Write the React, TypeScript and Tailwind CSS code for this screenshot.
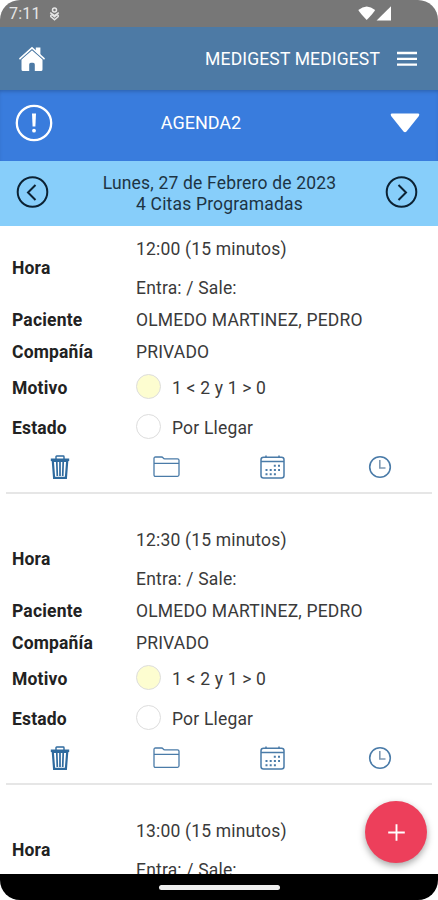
import type { ReactNode } from "react";

type Cita = {
  id: number;
  hora: string;
  paciente: string;
  compania: string;
  motivo: string;
  estado: string;
};

const CITAS: Cita[] = ["12:00", "12:30", "13:00"].map((h, i) => ({
  id: i,
  hora: `${h} (15 minutos)`,
  paciente: "OLMEDO MARTINEZ, PEDRO",
  compania: "PRIVADO",
  motivo: "1 < 2 y 1 > 0",
  estado: "Por Llegar",
}));

export default function App() {
  return (
    <div className="w-full h-screen bg-white overflow-hidden">
      <div className="relative h-full flex flex-col rounded-[20px] overflow-hidden bg-white font-['Roboto',sans-serif] text-[17.5px] tracking-[0.18px] text-[#3a3a3a]">
        <StatusBar />
        <Header />
        <AgendaBar />
        <DateBar />
        <main className="flex-1 min-h-0 overflow-hidden">
          {CITAS.map((c) => (
            <CitaCard key={c.id} cita={c} />
          ))}
        </main>
        <div className="h-[26px] shrink-0 bg-black flex justify-center pt-[10.5px]">
          <span className="h-[5px] w-[121px] rounded-full bg-[#eee]" />
        </div>
        <button
          aria-label="Nueva cita"
          className="absolute right-[11px] bottom-[37px] size-[62px] rounded-full bg-[#ed3f5b] grid place-items-center shadow-[0_3px_7px_rgba(0,0,0,0.35)]"
        >
          <svg width="17" height="17" viewBox="0 0 17 17" stroke="#fff" strokeWidth="1.900">
            <path d="M8.500 .2v16.600M.2 8.500h16.600" />
          </svg>
        </button>
      </div>
    </div>
  );
}

function StatusBar() {
  return (
    <div className="h-[27px] shrink-0 bg-[#777] flex items-center pl-[9px] pr-[47px] text-[#e6e6e6]">
      <span className="text-[16px] leading-none pt-px w-[40px]">7:11</span>
      <svg width="11" height="14" viewBox="0 0 11 14" fill="none" stroke="currentColor" strokeWidth="1.5">
        <circle cx="5.500" cy="3" r="2" />
        <path d="M1.200 5.600l4.300 3 4.300-3M5.500 12.800L2 9.800c-1-1.400.8-2.700 2-1.400l1.500 1.300L7 8.400c1.200-1.300 3 0 2 1.400z" />
      </svg>
      <svg className="ml-auto" width="33" height="15" viewBox="0 0 33 15" fill="#fff">
        <path d="M.3 4Q8.700 -3 17.100 4Q16 6.500 8.700 14Q1.500 6.500 .3 4z" />
        <path d="M33 .2V14.500H18.600z" />
      </svg>
    </div>
  );
}

function Header() {
  return (
    <header className="h-[63px] shrink-0 bg-[#4d7aa5] flex items-center pl-[19px] pr-5 text-white">
      <svg width="26" height="26" viewBox="0 0 26 26" fill="#fff">
        <path d="M16.800 1.500h4.600v8l-4.600-4z" />
        <path d="M13 4.300l10.500 9.300v9.900q0 1.500-1.500 1.500h-6.200v-6.500q0-1.700-1.700-1.700h-2.200q-1.700 0-1.700 1.700V25H4q-1.500 0-1.500-1.500V13.600z" />
        <path d="M1 12.600L13 1.800l12 10.800" fill="none" stroke="#fff" strokeWidth="1.700" strokeLinecap="round" />
        <path d="M1.800 13.600L13 3.600l11.200 10" fill="none" stroke="#4d7aa5" strokeWidth=".5" />
      </svg>
      <span className="ml-auto mr-4 pt-px tracking-[0.15px]">MEDIGEST MEDIGEST</span>
      <svg width="22" height="16" viewBox="0 0 22 16" stroke="#fff" strokeWidth="2.300">
        <path d="M1 2h20M1 7.800h20M1 13.600h20" />
      </svg>
    </header>
  );
}

function AgendaBar() {
  return (
    <div className="h-[71px] shrink-0 bg-[#397cdd] flex items-center pl-[15px] pr-[18px] pb-[6px] text-white shadow-[inset_0_3px_4px_-2px_rgba(0,0,0,0.25)]">
      <svg width="38" height="38" viewBox="0 0 38 38" fill="none" stroke="#fff">
        <circle cx="19" cy="19" r="17.200" strokeWidth="2.300" />
        <path d="M17 9.500h4l-.6 13h-2.800z" fill="#fff" stroke="none" />
        <circle cx="19" cy="26.700" r="1.900" fill="#fff" stroke="none" />
      </svg>
      <span className="flex-1 text-center pr-[41px] text-[18px] tracking-normal">AGENDA2</span>
      <svg width="30" height="20" viewBox="0 0 30 20" fill="#fff">
        <path d="M1.500 .5h27q1.500.8.4 2.600L16.500 18.500q-1.500 1.500-3 0L1.100 3.100Q0 1.300 1.500.5z" />
      </svg>
    </div>
  );
}

function DateBar() {
  return (
    <div className="h-[65px] shrink-0 bg-[#87cefa] flex items-center pl-4 pr-5 pb-[3px] text-[#1d3444]">
      <ArrowCircle d="M19.500 9l-7.500 7.500 7.500 7.500" />
      <div className="flex-1 text-center leading-[21px] pl-[5px] pt-[4px]">
        <div>Lunes, 27 de Febrero de 2023</div>
        <div>4 Citas Programadas</div>
      </div>
      <ArrowCircle d="M13.500 9l7.500 7.500-7.500 7.500" />
    </div>
  );
}

function ArrowCircle({ d }: { d: string }) {
  return (
    <svg width="33" height="33" viewBox="0 0 33 33" fill="none" stroke="#0c2233" strokeWidth="2">
      <circle cx="16.500" cy="16" r="14.800" />
      <path d={d} />
    </svg>
  );
}

function CitaCard({ cita }: { cita: Cita }) {
  return (
    <section className="h-[268px] mb-[23px] mx-[6px] pt-[6px] border-b-2 border-[#e6e6e6]">
      <Row label="Hora" className="h-[72px]">
        <div className="flex flex-col gap-[19px] leading-5">
          <span>{cita.hora}</span>
          <span>Entra: / Sale:</span>
        </div>
      </Row>
      <Row label="Paciente" className="h-8">{cita.paciente}</Row>
      <Row label="Compañía" className="h-8">{cita.compania}</Row>
      <Row label="Motivo" className="h-10">
        <Dot className="bg-[#fdfdd0]" />
        {cita.motivo}
      </Row>
      <Row label="Estado" className="h-10">
        <Dot className="bg-white" />
        {cita.estado}
      </Row>
      <div className="flex h-[38px] items-center [&>span]:w-[107px] [&>span]:flex [&>span]:justify-center">
        <span><TrashIcon /></span>
        <span><FolderIcon /></span>
        <span><CalendarIcon /></span>
        <span><ClockIcon /></span>
      </div>
    </section>
  );
}

function Row({ label, className, children }: { label: string; className: string; children: ReactNode }) {
  return (
    <div className={`flex items-center pl-[6px] ${className}`}>
      <span className="w-[124px] shrink-0 font-bold text-[#222]">{label}</span>
      <div className="flex items-center whitespace-nowrap">{children}</div>
    </div>
  );
}

function Dot({ className }: { className: string }) {
  return <span className={`size-[25px] mr-[11px] -mt-[3px] rounded-full border border-[#ddd] ${className}`} />;
}

function TrashIcon() {
  return (
    <svg className="ml-px" width="20" height="24" viewBox="0 0 20 24" fill="none" stroke="#2e6a9e">
      <path d="M6 4V1.700q0-.7.7-.7h6.600q.7 0 .7.700V4" strokeWidth="1.400" />
      <path d="M.8 4.800h18.400" strokeWidth="2.600" />
      <path d="M2.800 6l1.300 16.800h11.800l1.300-16.800z" strokeWidth="2.200" />
      <path d="M6.800 7l.5 14M10 7V21M13.200 7L12.700 21" strokeWidth="1.700" />
    </svg>
  );
}

function FolderIcon() {
  return (
    <svg className="ml-px" width="27" height="22" viewBox="0 0 27 22" fill="none" stroke="#4a7ba8" strokeWidth="1.300">
      <path d="M1 18.800V2.500Q1 1 2.500 1h6q1 0 1.600.9t1.700.9H24.500q1.500 0 1.500 1.500V18.800q0 1.500-1.500 1.500h-22Q1 20.300 1 18.800zM1 7.300h25" />
    </svg>
  );
}

function CalendarIcon() {
  return (
    <svg className="ml-px" width="25" height="24" viewBox="0 0 25 24" fill="none" stroke="#4a7ba8" strokeWidth="1.500">
      <rect x="1" y="2.200" width="23" height="20.800" rx="2.500" />
      <path d="M1 6.500h23M6 .5v2.500M19 .5v2.500" />
      <path d="M13.800 10.800h6.200M5.500 15h14.500M5.500 19.200h10.500" strokeWidth="2" strokeDasharray="2 2.200" />
    </svg>
  );
}

function ClockIcon() {
  return (
    <svg className="ml-[2px]" width="24" height="24" viewBox="0 0 24 24" fill="none" stroke="#4a7ba8" strokeWidth="1.600">
      <circle cx="12" cy="12" r="10.300" />
      <path d="M11.800 5v8h5.700" stroke="#7f99b3" />
    </svg>
  );
}
